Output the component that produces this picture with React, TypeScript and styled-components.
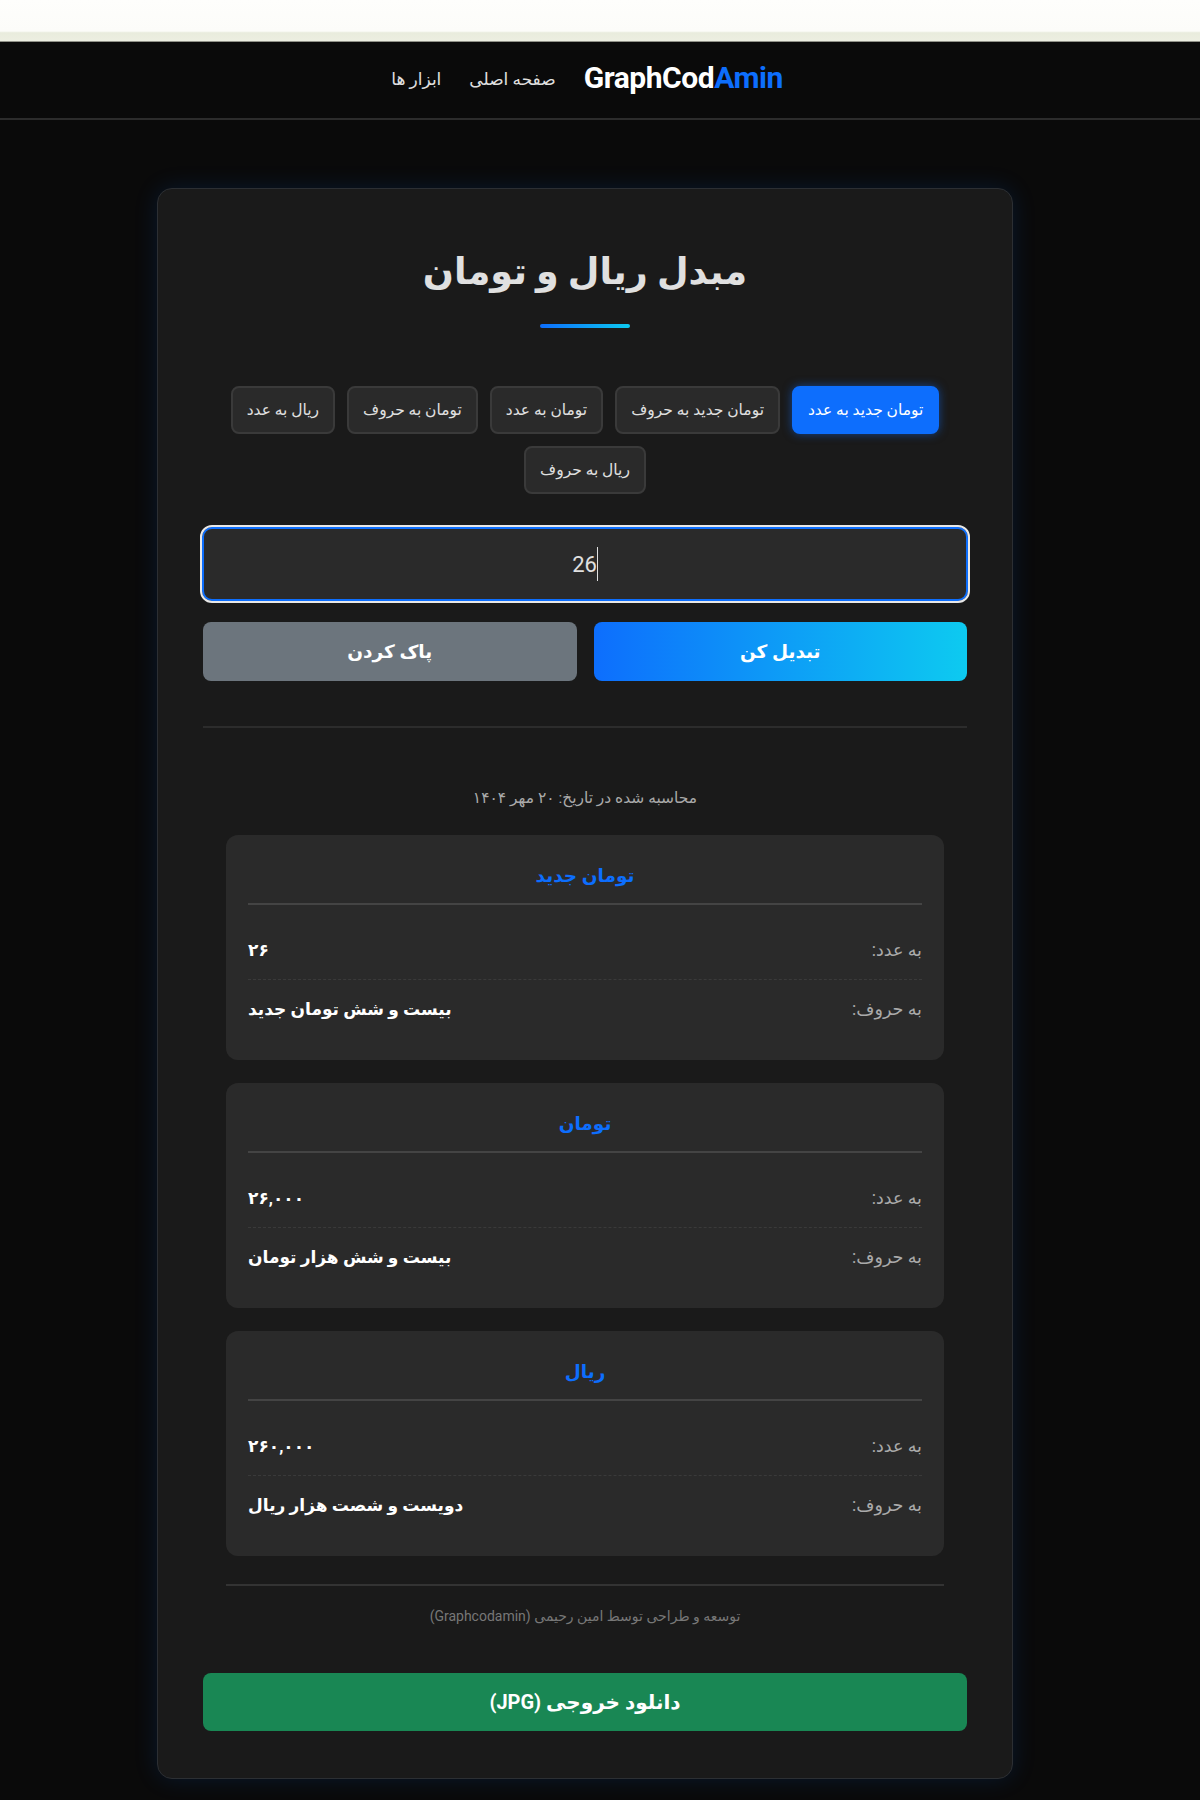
import React from 'react';
import styled, { createGlobalStyle } from 'styled-components';

const GlobalStyle = createGlobalStyle`
  html, body {
    margin: 0;
    padding: 0;
    background: #0a0a0a;
  }
  * {
    box-sizing: border-box;
  }
`;

const tabs = [
  { label: 'تومان جدید به عدد', active: true },
  { label: 'تومان جدید به حروف', active: false },
  { label: 'تومان به عدد', active: false },
  { label: 'تومان به حروف', active: false },
  { label: 'ریال به عدد', active: false },
  { label: 'ریال به حروف', active: false },
];

const results = [
  { title: 'تومان جدید', digits: '۲۶', words: 'بیست و شش تومان جدید' },
  { title: 'تومان', digits: '۲۶,۰۰۰', words: 'بیست و شش هزار تومان' },
  { title: 'ریال', digits: '۲۶۰,۰۰۰', words: 'دویست و شصت هزار ریال' },
];

const App = () => {
  return (
    <>
      <GlobalStyle />
      <Page dir="rtl">
        <PaperStrip />
        <Header>
          <Brand>
            GraphCod<BrandAccent>Amin</BrandAccent>
          </Brand>
          <NavLink>صفحه اصلی</NavLink>
          <NavLink>ابزار ها</NavLink>
        </Header>
        <Main>
          <Card>
            <Title>مبدل ریال و تومان</Title>
            <TitleBar />
            <Tabs>
              {tabs.map((tab) => (
                <Tab key={tab.label} active={tab.active}>
                  {tab.label}
                </Tab>
              ))}
            </Tabs>
            <InputBox>
              <InputValue>26</InputValue>
              <Caret />
            </InputBox>
            <Actions>
              <ConvertButton>تبدیل کن</ConvertButton>
              <ClearButton>پاک کردن</ClearButton>
            </Actions>
            <Divider />
            <DateLine>محاسبه شده در تاریخ: ۲۰ مهر ۱۴۰۴</DateLine>
            <Results>
              {results.map((item) => (
                <ResultCard key={item.title}>
                  <ResultTitle>{item.title}</ResultTitle>
                  <ResultRow>
                    <RowLabel>به عدد:</RowLabel>
                    <RowValue>{item.digits}</RowValue>
                  </ResultRow>
                  <ResultRow>
                    <RowLabel>به حروف:</RowLabel>
                    <RowValue>{item.words}</RowValue>
                  </ResultRow>
                </ResultCard>
              ))}
              <FooterNote>توسعه و طراحی توسط امین رحیمی (Graphcodamin)</FooterNote>
            </Results>
            <DownloadButton>دانلود خروجی (JPG)</DownloadButton>
          </Card>
        </Main>
      </Page>
    </>
  );
};

export default App;

const Page = styled.div`
  width: 1200px;
  height: 1800px;
  overflow: hidden;
  background: #0a0a0a;
  color: #e0e0e0;
  font-family: Roboto, 'DejaVu Sans', sans-serif;
`;

const PaperStrip = styled.div`
  height: 42px;
  background: linear-gradient(180deg, #fefefc 0%, #fcfcf9 74%, #e9ecdd 78%, #eceee1 97%, #55564f 100%);
`;

const Header = styled.header`
  height: 78px;
  display: flex;
  align-items: center;
  justify-content: center;
  gap: 28px;
  padding-right: 26px;
  padding-bottom: 2px;
  background: #0a0a0a;
  border-bottom: 2px solid #2c2c2c;
`;

const Brand = styled.div`
  direction: ltr;
  padding-bottom: 4px;
  font-size: 30px;
  font-weight: 700;
  color: #fff;
  letter-spacing: -0.45px;
`;

const BrandAccent = styled.span`
  color: #0d6efd;
`;

const NavLink = styled.a`
  font-size: 17px;
  color: #e0e0e0;
`;

const Main = styled.main`
  display: flex;
  justify-content: center;
  padding-top: 68px;
  padding-right: 30px;
`;

const Card = styled.section`
  width: 856px;
  height: 1591px;
  padding: 48px 45px 0;
  display: flex;
  flex-direction: column;
  align-items: center;
  background: #1a1a1a;
  border: 1px solid #2c2f33;
  border-radius: 15px;
  box-shadow: 0 0 24px rgba(13, 110, 253, 0.14);
`;

const Title = styled.h1`
  margin: 0;
  height: 72px;
  line-height: 70px;
  font-size: 36.5px;
  font-weight: 700;
  color: #e0e0e0;
`;

const TitleBar = styled.div`
  width: 90px;
  height: 4px;
  margin-top: 15px;
  border-radius: 2px;
  background: linear-gradient(90deg, #0d6efd, #0dcaf0);
`;

const Tabs = styled.div`
  width: 100%;
  margin-top: 58px;
  display: flex;
  flex-wrap: wrap;
  justify-content: center;
  gap: 12px;
`;

const Tab = styled.button<{ active: boolean }>`
  height: 48px;
  padding: 0 14px;
  font-family: inherit;
  font-size: 15.5px;
  font-weight: 500;
  color: ${({ active }) => (active ? '#fff' : '#e0e0e0')};
  background: ${({ active }) => (active ? '#0d6efd' : '#2a2a2a')};
  border: 2px solid ${({ active }) => (active ? '#0d6efd' : '#3a3a3a')};
  border-radius: 8px;
  box-shadow: ${({ active }) => (active ? '0 0 10px rgba(13, 110, 253, 0.5)' : 'none')};
`;

const InputBox = styled.div`
  width: 770px;
  height: 78px;
  flex-shrink: 0;
  margin-top: 31px;
  display: flex;
  align-items: center;
  justify-content: center;
  direction: ltr;
  background: #2a2a2a;
  border: 2px solid #e8e8e8;
  border-radius: 12px;
  box-shadow: inset 0 0 0 2px #0d6efd;
`;

const InputValue = styled.span`
  font-size: 22px;
  color: #e0e0e0;
`;

const Caret = styled.span`
  width: 1px;
  height: 34px;
  background: #e0e0e0;
`;

const Actions = styled.div`
  width: 100%;
  margin-top: 19px;
  display: flex;
  gap: 17px;
`;

const ConvertButton = styled.button`
  flex: 1;
  height: 59px;
  font-family: inherit;
  font-size: 18.5px;
  font-weight: 700;
  color: #fff;
  border: none;
  border-radius: 8px;
  background: linear-gradient(90deg, #0d6efd, #0dcaf0);
`;

const ClearButton = styled(ConvertButton)`
  background: #6c757d;
`;

const Divider = styled.hr`
  width: 100%;
  height: 2px;
  margin: 45px 0 0;
  border: none;
  background: #2c2c2c;
`;

const DateLine = styled.p`
  margin: 60px 0 0;
  line-height: 20px;
  font-size: 15.5px;
  color: #aaa;
`;

const Results = styled.div`
  width: 718px;
  margin-top: 27px;
  display: flex;
  flex-direction: column;
  gap: 23px;
`;

const ResultCard = styled.article`
  height: 225px;
  padding: 22px 22px 0;
  background: #2a2a2a;
  border-radius: 12px;
`;

const ResultTitle = styled.h3`
  margin: 0;
  height: 48px;
  line-height: 38px;
  text-align: center;
  font-size: 18.5px;
  font-weight: 700;
  color: #0d6efd;
  border-bottom: 2px solid #444;
`;

const ResultRow = styled.div`
  height: 59px;
  display: flex;
  align-items: center;
  justify-content: space-between;
  border-bottom: 1px dashed #3a3a3a;
  &:nth-child(2) {
    margin-top: 16px;
  }
  &:last-child {
    padding-bottom: 2px;
    border-bottom: none;
  }
`;

const RowLabel = styled.span`
  font-size: 17.5px;
  color: #aaa;
`;

const RowValue = styled.span`
  font-size: 17px;
  font-weight: 700;
  color: #fff;
`;

const FooterNote = styled.p`
  margin: 5px 0 0;
  padding-top: 20px;
  line-height: 20px;
  text-align: center;
  font-size: 14px;
  color: #777;
  border-top: 2px solid #333;
`;

const DownloadButton = styled.button`
  width: 100%;
  height: 58px;
  margin-top: 47px;
  font-family: inherit;
  font-size: 20px;
  font-weight: 700;
  color: #fff;
  border: none;
  border-radius: 8px;
  background: #198754;
`;
